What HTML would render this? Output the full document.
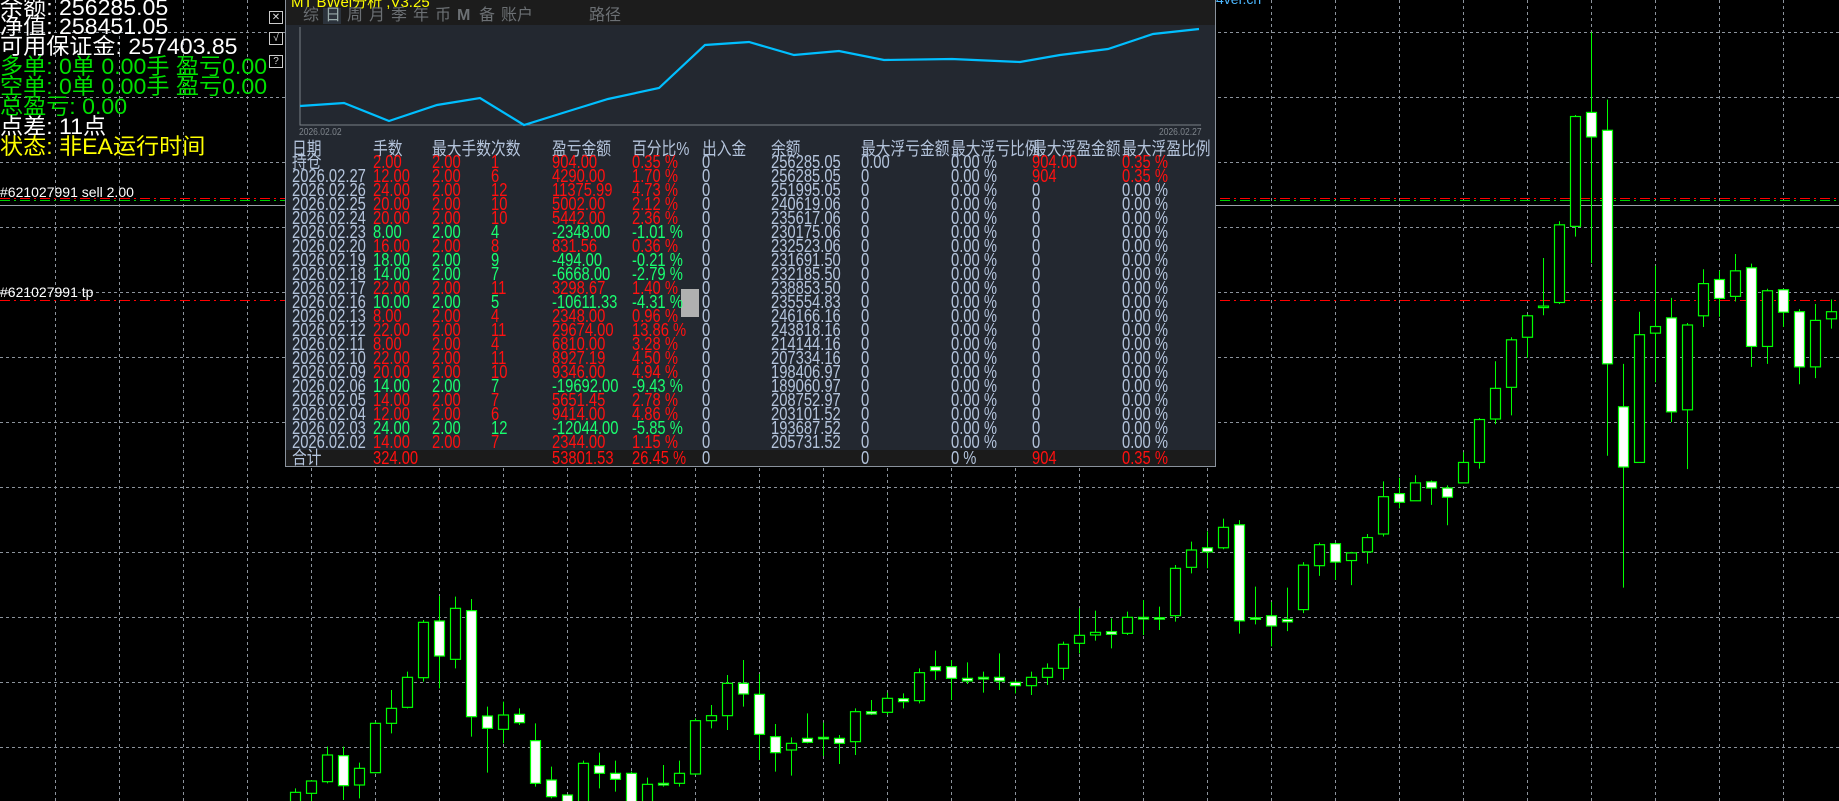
<!DOCTYPE html>
<html><head><meta charset="utf-8">
<style>
*{margin:0;padding:0;box-sizing:border-box}
body{width:1839px;height:801px;background:#000;overflow:hidden;position:relative;font-family:"Liberation Sans","Noto Sans CJK SC",sans-serif}
.a{position:absolute;white-space:nowrap}
.info{font-size:22px;line-height:22px;left:0px;transform:scaleX(1.05);transform-origin:0 0}
.w{color:#fff}.g{color:#00e000}.y{color:#ffff00}
#panel{position:absolute;left:285px;top:0;width:931px;height:467px;background:#232830;border:1px solid #8a929c;border-top:none;overflow:hidden}
.t{position:absolute;font-size:18px;line-height:15px;transform:scaleX(0.82);transform-origin:0 0;white-space:nowrap}
.gr{color:#b4c4dc}.rd{color:#ff1010}.gn{color:#19ff70}
.tab{position:absolute;top:7px;font-size:16px;color:#6c7074;line-height:17px}
</style></head><body>
<svg id="bg" class="a" style="left:0;top:0" width="1839" height="801"></svg>

<div class="a info w" style="top:-3px">余额: 256285.05</div>
<div class="a info w" style="top:16px">净值: 258451.05</div>
<div class="a info w" style="top:36px">可用保证金: 257403.85</div>
<div class="a info g" style="top:56px">多单: 0单 0.00手 盈亏0.00</div>
<div class="a info g" style="top:76px">空单: 0单 0.00手 盈亏0.00</div>
<div class="a info g" style="top:96px">总盈亏: 0.00</div>
<div class="a info w" style="top:116px">点差: 11点</div>
<div class="a info y" style="top:136px">状态: 非EA运行时间</div>
<div class="a" style="left:0;top:184px;font-size:14px;color:#fff">#621027991 sell 2.00</div>
<div class="a" style="left:0;top:284px;font-size:14px;color:#fff">#621027991 tp</div>

<div class="a" style="left:269px;top:11px;width:14px;height:13px;border:1px solid #ccc;color:#ddd;font-size:10px;line-height:11px;text-align:center">✕</div>
<div class="a" style="left:269px;top:32px;width:14px;height:13px;border:1px solid #ccc;color:#ddd;font-size:10px;line-height:11px;text-align:center">√</div>
<div class="a" style="left:269px;top:55px;width:14px;height:13px;border:1px solid #ccc;color:#ddd;font-size:10px;line-height:11px;text-align:center">?</div>

<div class="a" style="left:1132px;top:-9px;font-size:14px;color:#4db8ff">http://www.mt4ver.cn</div>

<div id="panel">
 <div class="a" style="left:0;top:0;width:931px;height:25px;background:#1c1c1c"></div>
 <div class="a" style="left:5px;top:-9px;font-size:15px;color:#ffff00">MT BWei分析 ,V3.25</div>
 <div class="a" style="left:37px;top:8px;width:18px;height:16px;background:#2c333c"></div>
 <div class="tab" style="left:17px">综</div><div class="tab" style="left:39px;color:#9aa">日</div>
 <div class="tab" style="left:61px">周</div><div class="tab" style="left:83px">月</div>
 <div class="tab" style="left:105px">季</div><div class="tab" style="left:127px">年</div>
 <div class="tab" style="left:149px">币</div><div class="tab" style="left:171px;font-weight:bold">M</div>
 <div class="tab" style="left:193px">备</div><div class="tab" style="left:215px">账户</div>
 <div class="tab" style="left:303px">路径</div>
 <svg class="a" style="left:0;top:0" width="931" height="150">
  <polyline points="14,27 14,125 915,125" fill="none" stroke="#7a7f86" stroke-width="1"/>
  <polyline fill="none" stroke="#00bfff" stroke-width="2.2" points="14,106 58,103 103,121 151,105 194,98 238,125 283,111 322,99 373,88 419,45 463,42 508,55 553,51 598,60 666,59 711,61 734,62 774,55 822,49 867,34 913,29"/>
 </svg>
 <div class="a" style="left:13px;top:127px;font-size:10px;color:#7f858c;transform:scaleX(.85);transform-origin:0 0">2026.02.02</div>
 <div class="a" style="left:873px;top:127px;font-size:10px;color:#7f858c;transform:scaleX(.85);transform-origin:0 0">2026.02.27</div>
 <div class="a" style="left:0;top:450px;width:931px;height:17px;background:#1b1b1b"></div>
 <div class="a" style="left:395px;top:289px;width:18px;height:28px;background:#b0b0b0"></div>
 <div id="tbl"></div>
</div>

<script>
var NS="http://www.w3.org/2000/svg",bg=document.getElementById('bg');
function el(n,a){var e=document.createElementNS(NS,n);for(var k in a)e.setAttribute(k,a[k]);bg.appendChild(e);return e;}
for(var k=0;k<28;k++){var x=55.5+64*k;el('line',{x1:x,y1:0,x2:x,y2:801,stroke:'#8c939c','stroke-dasharray':'3,3','stroke-width':1});}
for(var k=0;k<12;k++){var y=32.5+65*k;el('line',{x1:0,y1:y,x2:1839,y2:y,stroke:'#8c939c','stroke-dasharray':'3,3','stroke-width':1});}
el('line',{x1:0,y1:198.5,x2:1839,y2:198.5,stroke:'#ff0000','stroke-dasharray':'10,4,2,4'});
el('line',{x1:0,y1:200.5,x2:1839,y2:200.5,stroke:'#00d000','stroke-dasharray':'10,4,2,4'});
el('line',{x1:0,y1:205.5,x2:1839,y2:205.5,stroke:'#9aa0a8'});
el('line',{x1:0,y1:300.5,x2:1839,y2:300.5,stroke:'#ff0000','stroke-dasharray':'10,4,2,4'});
var L=[[0,'h',450,502,425,520],[1,'h',505,647,495,665],[2,'w',653,657,620,690],[3,'w',652,657,600,705],[4,'h',652,700,635,705],[5,'w',695,703,655,745],[6,'h',697,705,632,722],[7,'h',706,730,625,760],[8,'h',733,805,725,840],[9,'h',805,832,790,855],[10,'h',832,857,815,885],[11,'w',847,857,840,880],[12,'w',832,843,760,870],[13,'w',832,837,815,878],[14,'w',835,843,787,852],[15,'w',800,835,780,900],[16,'w',800,812,752,840],[17,'h',818,902,805,910],[18,'w',896,905,880,925],[19,'h',895,937,878,945],[20,'w',935,942,900,945],[21,'h',935,1025,925,1065],[22,'w',1015,1030,1005,1092],[23,'w',1012,1016,968,1068],[24,'w',1015,1027,940,1030],[25,'h',1030,1050,1012,1127],[26,'w',1010,1058,972,1115],[27,'w',883,1003,822,1080],[28,'w',850,882,780,920],[29,'h',850,947,825,990],[30,'h',947,962,915,985],[31,'h',962,1122,955,1125],[32,'h',1120,1150,1082,1160],[33,'w',1150,1155,1095,1160],[34,'h',1153,1210,1133,1210],[35,'w',1120,1210,1115,1210],[36,'w',1120,1138,1082,1175],[37,'w',1097,1120,1058,1165],[38,'h',1090,1210,1082,1210],[39,'w',1185,1210,1185,1210],[40,'w',1140,1190,1100,1195],[41,'w',1022,1150,970,1160],[42,'w',943,968,925,975],[43,'h',945,988,905,1030],[44,'w',948,985,920,1118],[45,'w',632,950,597,1010],[46,'h',625,778,590,805],[47,'w',663,768,588,865],[48,'h',667,833,660,845],[49,'h',832,922,815,925],[50,'h',925,970,870,1000],[51,'h',970,1118,965,1120],[52,'h',1105,1155,1088,1195],[53,'w',1067,1157,1040,1200],[54,'h',1065,1145,1040,1150],[55,'h',1143,1180,1140,1210],[56,'h',1177,1210,1165,1210]];
function candle(x,t,bt,bb,wt,wb){x=Math.round(x)+.5;
 el('line',{x1:x,y1:wt,x2:x,y2:wb,stroke:'#00ff00'});
 var h=Math.max(bb-bt,1.5);
 el('rect',{x:x-5,y:bt,width:10,height:h,fill:t=='w'?'#fff':'#000',stroke:'#00ff00','stroke-width':1.2});}
L.forEach(function(c){var x=1190.5-16*c[0];candle(x,c[1],400+c[2]/3,400+c[3]/3,400+c[4]/3,400+c[5]/3);});
var R=[[16,'w',1072,1080,1040,1112],[55,'h',1032,1072,1015,1075],[94,'w',1027,1215,1018,1240],[134,'w',1209,1212,1148,1222],[173,'w',1205,1225,1178,1265],[212,'w',1212,1217,1150,1235],[251,'h',1106,1193,1100,1200],[290,'h',1066,1107,1062,1127],[330,'w',1064,1100,1062,1135],[369,'h',1082,1097,1080,1145],[408,'h',1052,1080,1045,1103],[447,'h',972,1045,942,1050],[487,'w',966,983,935,995],[526,'h',945,980,930,980],[565,'w',943,955,940,988],[604,'w',955,973,950,1028],[644,'h',905,945,885,945],[683,'h',821,905,818,917],[722,'h',760,820,707,830],[762,'h',665,758,660,813],[801,'h',618,660,615,700],[840,'h',599,601,505,617],[879,'h',440,592,433,595],[918,'h',228,443,225,463],[958,'w',220,268,63,515],[997,'w',255,712,195,892],[1037,'w',796,914,712,1150],[1076,'h',655,905,610,905],[1115,'h',639,652,520,748],[1154,'w',622,806,583,826],[1194,'h',636,802,632,918],[1233,'h',555,618,527,640],[1272,'w',547,584,530,620],[1311,'h',530,580,497,590],[1351,'w',524,678,516,718],[1390,'h',569,678,565,712],[1429,'w',567,611,565,640],[1468,'w',610,718,605,752],[1508,'h',627,718,595,740],[1547,'h',610,624,586,643]];
R.forEach(function(c){var x=1206.5+16*Math.round((c[0]/2.45-6.5)/16);candle(x,c[1],c[2]/1.957,c[3]/1.957,c[4]/1.957,c[5]/1.957);});

var cols=[6,87,146,205,266,346,416,485,575,665,746,836];
var rows=[
['gr','日期','gr','手数','gr','最大手数','gr','次数','gr','盈亏金额','gr','百分比%','gr','出入金','gr','余额','gr','最大浮亏金额','gr','最大浮亏比例','gr','最大浮盈金额','gr','最大浮盈比例'],
['gr','持仓','rd','2.00','rd','2.00','rd','1','rd','904.00','rd','0.35 %','gr','0','gr','256285.05','gr','0.00','gr','0.00 %','rd','904.00','rd','0.35 %']];
var D=[['2026.02.27','12.00','6','4290.00','1.70 %','256285.05',1,'904','0.35 %'],['2026.02.26','24.00','12','11375.99','4.73 %','251995.05',1],['2026.02.25','20.00','10','5002.00','2.12 %','240619.06',1],['2026.02.24','20.00','10','5442.00','2.36 %','235617.06',1],['2026.02.23','8.00','4','-2348.00','-1.01 %','230175.06',0],['2026.02.20','16.00','8','831.56','0.36 %','232523.06',1],['2026.02.19','18.00','9','-494.00','-0.21 %','231691.50',0],['2026.02.18','14.00','7','-6668.00','-2.79 %','232185.50',0],['2026.02.17','22.00','11','3298.67','1.40 %','238853.50',1],['2026.02.16','10.00','5','-10611.33','-4.31 %','235554.83',0],['2026.02.13','8.00','4','2348.00','0.96 %','246166.16',1],['2026.02.12','22.00','11','29674.00','13.86 %','243818.16',1],['2026.02.11','8.00','4','6810.00','3.28 %','214144.16',1],['2026.02.10','22.00','11','8927.19','4.50 %','207334.16',1],['2026.02.09','20.00','10','9346.00','4.94 %','198406.97',1],['2026.02.06','14.00','7','-19692.00','-9.43 %','189060.97',0],['2026.02.05','14.00','7','5651.45','2.78 %','208752.97',1],['2026.02.04','12.00','6','9414.00','4.86 %','203101.52',1],['2026.02.03','24.00','12','-12044.00','-5.85 %','193687.52',0],['2026.02.02','14.00','7','2344.00','1.15 %','205731.52',1]];
D.forEach(function(d){var c=d[6]?'rd':'gn';rows.push(['gr',d[0],c,d[1],c,'2.00',c,d[2],c,d[3],c,d[4],'gr','0','gr',d[5],'gr','0','gr','0.00 %',d[7]?'rd':'gr',d[7]||'0',d[7]?'rd':'gr',d[8]||'0.00 %']);});
var h='';
rows.forEach(function(r,i){var y=(i==0?144:157+14*(i-1))-2;for(var j=0;j<12;j++){var x=cols[j];h+='<div class="t '+r[2*j]+'" style="left:'+x+'px;top:'+y+'px">'+r[2*j+1]+'</div>';}});
var tot=[[6,'gr','合计'],[87,'rd','324.00'],[266,'rd','53801.53'],[346,'rd','26.45 %'],[416,'gr','0'],[575,'gr','0'],[665,'gr','0 %'],[746,'rd','904'],[836,'rd','0.35 %']];
tot.forEach(function(t){h+='<div class="t '+t[1]+'" style="left:'+t[0]+'px;top:451px">'+t[2]+'</div>';});
document.getElementById('tbl').innerHTML=h;
</script>
</body></html>
